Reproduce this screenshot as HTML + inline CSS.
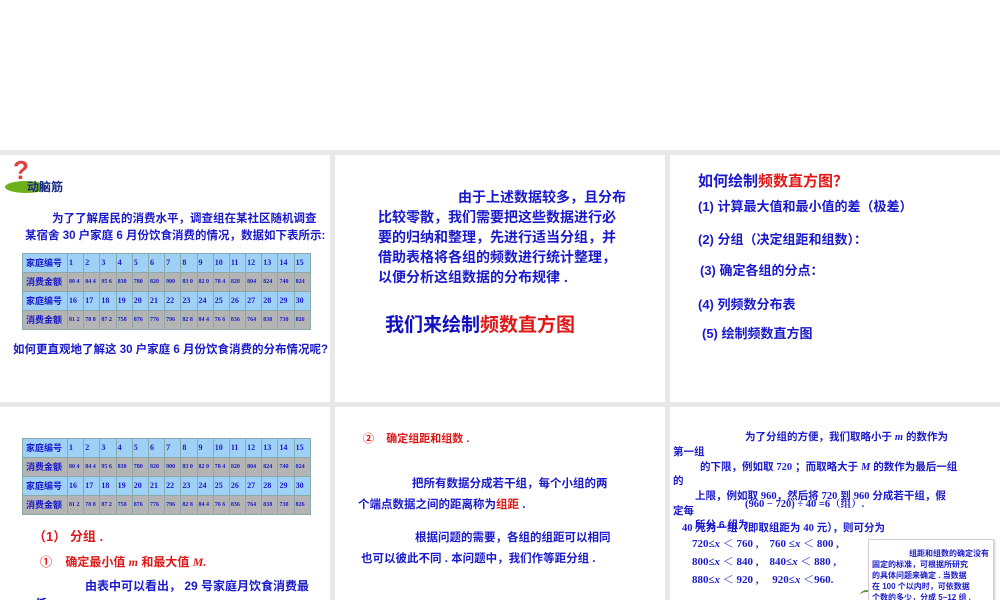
<!DOCTYPE html>
<html><head><meta charset="utf-8">
<style>
*{margin:0;padding:0;box-sizing:border-box}
body{width:1000px;height:600px;overflow:hidden;background:#fff;position:relative;font-family:"Liberation Sans","Noto Sans CJK SC",sans-serif;color:#1a1acc;font-weight:bold}
.bg{position:absolute;left:0;top:150px;width:1000px;height:450px;background:#e8e8e8}
.p{position:absolute;background:#fff;overflow:hidden}
.t{position:absolute;white-space:nowrap;font-size:13px}
table{position:absolute;border-collapse:collapse;font-family:"Liberation Serif","Noto Serif CJK SC",serif;color:#1a1acc;border:1px solid #555;table-layout:fixed}
td{border:1px solid #8aa;font-size:6px;line-height:6px;padding:0 1px;height:19px;vertical-align:middle;overflow:hidden;word-wrap:break-word}
td.l{font-family:"Liberation Sans","Noto Sans CJK SC",sans-serif;font-size:9px;padding-left:3px;white-space:nowrap}
tr.a td{background:#9fd0f5;font-size:8px}
tr.b td{background:#b4b4b4}
tr.a td.l,tr.b td.l{font-size:9px}
.r{color:#e01818}
.s{font-family:"Liberation Serif","Noto Serif CJK SC",serif}
</style></head><body>
<div class="bg"></div>

<!-- panel 1 -->
<div class="p" style="left:0;top:155px;width:330px;height:247px">
  <div style="position:absolute;left:5px;top:26px;width:42px;height:12px;border-radius:50%;background:#6cb01c"></div>
  <div style="position:absolute;left:13px;top:0px;font-size:26px;color:#e04040;font-family:'Liberation Sans',sans-serif;font-weight:bold">?</div>
  <div class="t" style="left:27px;top:23px;font-size:12px;color:#1a2a80;font-weight:bold">动脑筋</div>
  <div class="t" style="left:52px;top:55px;font-size:11.5px">为了了解居民的消费水平，调查组在某社区随机调查</div>
  <div class="t" style="left:25px;top:72px;font-size:11.5px">某宿舍 30 户家庭 6 月份饮食消费的情况，数据如下表所示:</div>
  <table style="left:22px;top:98px;width:288px">
   <colgroup><col style="width:45px"><col span="15" style="width:16.2px"></colgroup>
   <tr class="a"><td class="l">家庭编号</td><td>1</td><td>2</td><td>3</td><td>4</td><td>5</td><td>6</td><td>7</td><td>8</td><td>9</td><td>10</td><td>11</td><td>12</td><td>13</td><td>14</td><td>15</td></tr>
   <tr class="b"><td class="l">消费金额</td><td>80 4</td><td>84 4</td><td>95 6</td><td>830</td><td>780</td><td>820</td><td>900</td><td>83 0</td><td>82 0</td><td>78 4</td><td>820</td><td>804</td><td>824</td><td>740</td><td>824</td></tr>
   <tr class="a"><td class="l">家庭编号</td><td>16</td><td>17</td><td>18</td><td>19</td><td>20</td><td>21</td><td>22</td><td>23</td><td>24</td><td>25</td><td>26</td><td>27</td><td>28</td><td>29</td><td>30</td></tr>
   <tr class="b"><td class="l">消费金额</td><td>81 2</td><td>78 8</td><td>87 2</td><td>758</td><td>876</td><td>776</td><td>796</td><td>82 8</td><td>84 4</td><td>76 6</td><td>836</td><td>764</td><td>838</td><td>730</td><td>826</td></tr>
  </table>
  <div class="t" style="left:13px;top:186px;font-size:11.5px">如何更直观地了解这 30 户家庭 6 月份饮食消费的分布情况呢?</div>
</div>

<!-- panel 2 -->
<div class="p" style="left:335px;top:155px;width:330px;height:247px">
  <div class="t" style="left:123px;top:32px;font-size:14px">由于上述数据较多，且分布</div>
  <div class="t" style="left:43px;top:52px;font-size:14px">比较零散，我们需要把这些数据进行必</div>
  <div class="t" style="left:43px;top:72px;font-size:14px">要的归纳和整理，先进行适当分组，并</div>
  <div class="t" style="left:43px;top:92px;font-size:14px">借助表格将各组的频数进行统计整理，</div>
  <div class="t" style="left:43px;top:112px;font-size:14px">以便分析这组数据的分布规律 .</div>
  <div class="t" style="left:50px;top:155px;font-size:19px;color:#1010c0">我们来绘制<span class="r">频数直方图</span></div>
</div>

<!-- panel 3 -->
<div class="p" style="left:670px;top:155px;width:330px;height:247px">
  <div class="t" style="left:28px;top:15px;font-size:15px">如何绘制<span class="r">频数直方图？</span></div>
  <div class="t" style="left:28px;top:41px;font-size:13px">(1) 计算最大值和最小值的差（极差）</div>
  <div class="t" style="left:28px;top:74px;font-size:13px">(2) 分组（决定组距和组数）：</div>
  <div class="t" style="left:30px;top:105px;font-size:13px">(3) 确定各组的分点：</div>
  <div class="t" style="left:28px;top:139px;font-size:13px">(4) 列频数分布表</div>
  <div class="t" style="left:32px;top:168px;font-size:13px">(5) 绘制频数直方图</div>
</div>

<!-- panel 4 -->
<div class="p" style="left:0;top:407px;width:330px;height:193px">
  <table style="left:22px;top:31px;width:288px">
   <colgroup><col style="width:45px"><col span="15" style="width:16.2px"></colgroup>
   <tr class="a"><td class="l">家庭编号</td><td>1</td><td>2</td><td>3</td><td>4</td><td>5</td><td>6</td><td>7</td><td>8</td><td>9</td><td>10</td><td>11</td><td>12</td><td>13</td><td>14</td><td>15</td></tr>
   <tr class="b"><td class="l">消费金额</td><td>80 4</td><td>84 4</td><td>95 6</td><td>830</td><td>780</td><td>820</td><td>900</td><td>83 0</td><td>82 0</td><td>78 4</td><td>820</td><td>804</td><td>824</td><td>740</td><td>824</td></tr>
   <tr class="a"><td class="l">家庭编号</td><td>16</td><td>17</td><td>18</td><td>19</td><td>20</td><td>21</td><td>22</td><td>23</td><td>24</td><td>25</td><td>26</td><td>27</td><td>28</td><td>29</td><td>30</td></tr>
   <tr class="b"><td class="l">消费金额</td><td>81 2</td><td>78 8</td><td>87 2</td><td>758</td><td>876</td><td>776</td><td>796</td><td>82 8</td><td>84 4</td><td>76 6</td><td>836</td><td>764</td><td>838</td><td>730</td><td>826</td></tr>
  </table>
  <div class="t r" style="left:33px;top:119px;font-size:13px">（1） 分组 .</div>
  <div class="t r" style="left:40px;top:146px;font-size:12px">①&nbsp;&nbsp;&nbsp; 确定最小值 <i class="s">m</i> 和最大值 <i class="s">M.</i></div>
  <div class="t" style="left:85px;top:170px;font-size:12px">由表中可以看出， 29 号家庭月饮食消费最</div>
  <div class="t" style="left:35px;top:188px;font-size:12px">低</div>
</div>

<!-- panel 5 -->
<div class="p" style="left:335px;top:407px;width:330px;height:193px">
  <div class="t r" style="left:28px;top:23px;font-size:11px">②&nbsp;&nbsp;&nbsp; 确定组距和组数 .</div>
  <div class="t" style="left:77px;top:68px;font-size:11.5px">把所有数据分成若干组，每个小组的两</div>
  <div class="t" style="left:23px;top:89px;font-size:11.5px">个端点数据之间的距离称为<span class="r">组距</span> .</div>
  <div class="t" style="left:80px;top:122px;font-size:11.5px">根据问题的需要，各组的组距可以相同</div>
  <div class="t" style="left:26px;top:143px;font-size:11.5px">也可以彼此不同 . 本问题中，我们作等距分组 .</div>
</div>

<!-- panel 6 -->
<div class="p" style="left:670px;top:407px;width:330px;height:193px">
  <div class="t" style="left:75px;top:22px;font-size:10.5px">为了分组的方便，我们取略小于 <i class="s">m</i> 的数作为</div>
  <div class="t" style="left:3px;top:37px;font-size:10.5px">第一组</div>
  <div class="t" style="left:30px;top:52px;font-size:10.5px">的下限，例如取 <span class="s">720</span> ；而取略大于 <i class="s">M</i> 的数作为最后一组</div>
  <div class="t" style="left:3px;top:66px;font-size:10.5px">的</div>
  <div class="t" style="left:25px;top:81px;font-size:10.5px">上限，例如取 <span class="s">960</span>，然后将 <span class="s">720</span> 到 <span class="s">960</span> 分成若干组，假</div>
  <div class="t s" style="left:75px;top:89px;font-size:10.5px">(960 − 720) ÷ 40 =6（组）.</div>
  <div class="t" style="left:3px;top:96px;font-size:10.5px">定每</div>
  <div class="t" style="left:25px;top:110px;font-size:10.5px">所分 6 组为</div>
  <div class="t" style="left:12px;top:113px;font-size:10.5px"><span class="s">40</span> 元为一组（即取组距为 <span class="s">40</span> 元），则可分为</div>
  <div class="t s" style="left:22px;top:128px;font-size:11px">720≤<i>x</i> ＜ 760 ,&nbsp;&nbsp;&nbsp; 760 ≤<i>x</i> ＜ 800 ,</div>
  <div class="t s" style="left:22px;top:146px;font-size:11px">800≤<i>x</i> ＜ 840 ,&nbsp;&nbsp;&nbsp; 840≤<i>x</i> ＜ 880 ,</div>
  <div class="t s" style="left:22px;top:164px;font-size:11px">880≤<i>x</i> ＜ 920 ,&nbsp;&nbsp;&nbsp;&nbsp; 920≤<i>x</i> ＜960.</div>
  <div style="position:absolute;left:190px;top:183px;width:14px;height:10px;border-top:2px solid #5a9a30;border-radius:50% 50% 0 0"></div>
  <div style="position:absolute;left:198px;top:132px;width:126px;height:70px;background:#fff;border:1px solid #d8c8d8;box-shadow:1px 1px 2px #ccc">
    <div class="t" style="left:40px;top:8px;font-size:8px">组距和组数的确定没有</div>
    <div class="t" style="left:3px;top:19px;font-size:8px">固定的标准，可根据所研究</div>
    <div class="t" style="left:3px;top:30px;font-size:8px">的具体问题来确定 . 当数据</div>
    <div class="t" style="left:3px;top:41px;font-size:8px">在 100 个以内时，可依数据</div>
    <div class="t" style="left:3px;top:52px;font-size:8px">个数的多少，分成 5~12 组 .</div>
  </div>
</div>
</body></html>
